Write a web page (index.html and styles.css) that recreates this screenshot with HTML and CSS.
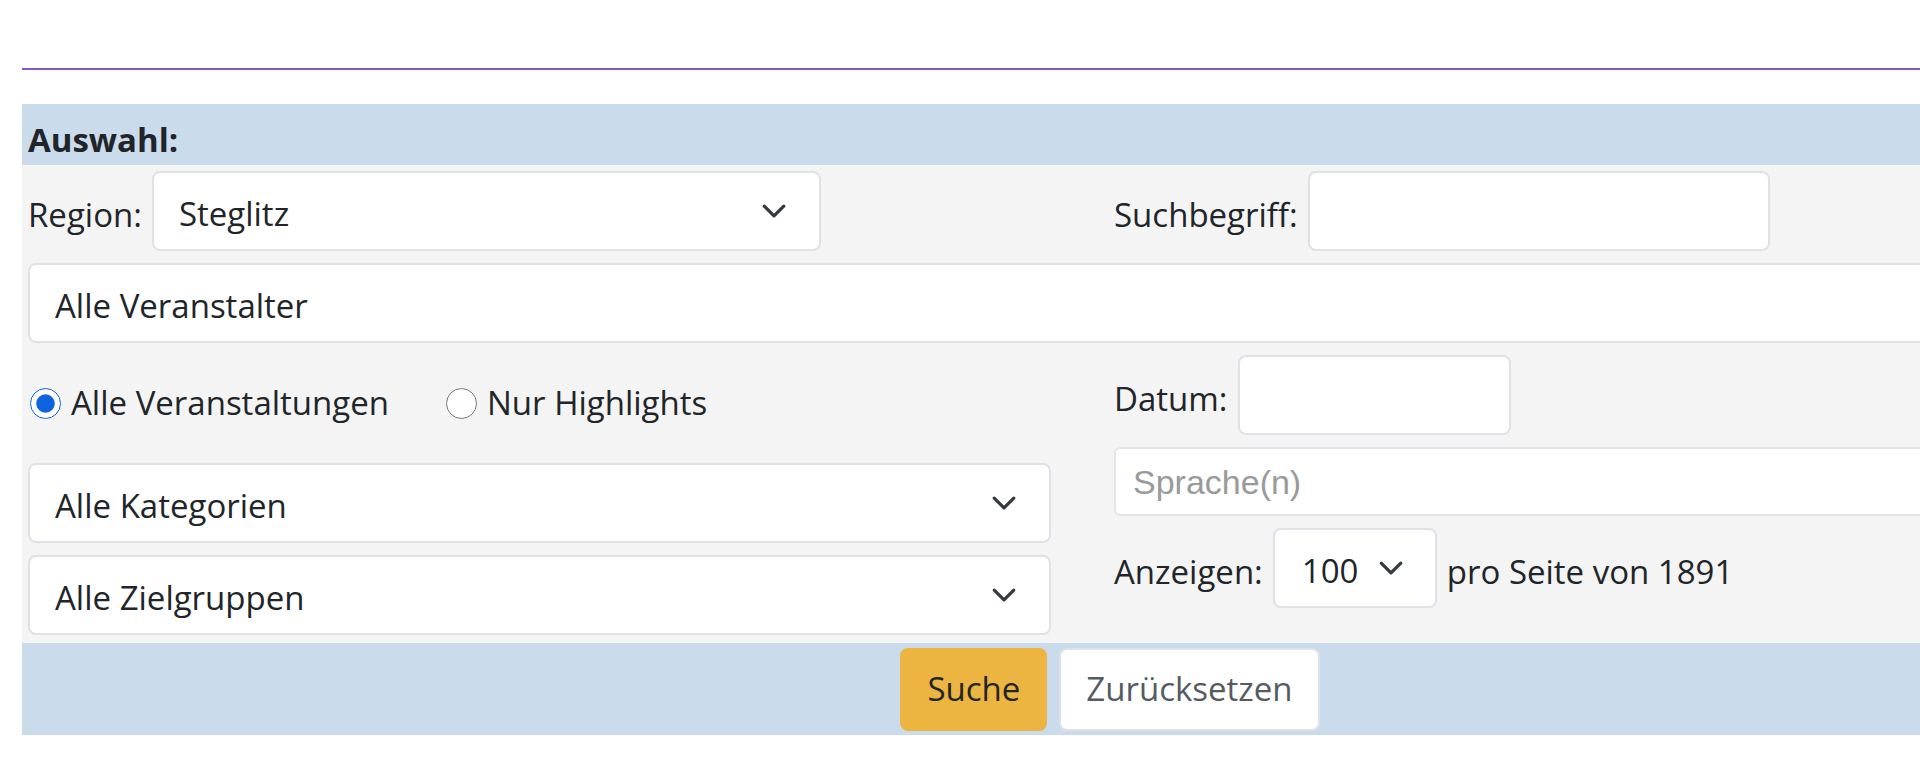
FILE: index.html
```html
<!DOCTYPE html>
<html lang="de">
<head>
<meta charset="utf-8">
<title>Veranstaltungen – Auswahl</title>
<link rel="stylesheet" href="styles.css">
</head>
<body>
<div class="page">
  <hr class="rule">
  <form class="filter">
    <div class="filter-head">Auswahl:</div>
    <div class="filter-body">
      <div class="pair">
        <div class="field">
          <label class="label" for="region">Region:</label>
          <div class="select-wrap w-region">
            <select id="region" class="control select"><option>Steglitz</option></select>
            <svg class="chev" width="26" height="26" viewBox="0 0 16 16"><path d="M2 5l6 6 6-6"/></svg>
          </div>
        </div>
        <div class="field">
          <label class="label" for="q">Suchbegriff:</label>
          <input id="q" class="control input w-search" type="text">
        </div>
      </div>

      <div class="select-wrap w-full">
        <select class="control select"><option>Alle Veranstalter</option></select>
        <svg class="chev" width="26" height="26" viewBox="0 0 16 16"><path d="M2 5l6 6 6-6"/></svg>
      </div>

      <div class="pair">
        <div class="col">
          <div class="radios">
            <label class="radio"><input type="radio" name="hl" checked><span>Alle Veranstaltungen</span></label>
            <label class="radio"><input type="radio" name="hl"><span>Nur Highlights</span></label>
          </div>
          <div class="select-wrap">
            <select class="control select"><option>Alle Kategorien</option></select>
            <svg class="chev" width="26" height="26" viewBox="0 0 16 16"><path d="M2 5l6 6 6-6"/></svg>
          </div>
          <div class="select-wrap">
            <select class="control select"><option>Alle Zielgruppen</option></select>
            <svg class="chev" width="26" height="26" viewBox="0 0 16 16"><path d="M2 5l6 6 6-6"/></svg>
          </div>
        </div>
        <div class="col">
          <div class="field">
            <label class="label" for="datum">Datum:</label>
            <input id="datum" class="control input w-date" type="text">
          </div>
          <input class="multi" type="text" placeholder="Sprache(n)">
          <div class="field">
            <label class="label" for="count">Anzeigen:</label>
            <div class="select-wrap w-count">
              <select id="count" class="control select select-sm"><option>100</option></select>
              <svg class="chev chev-sm" width="26" height="26" viewBox="0 0 16 16"><path d="M2 5l6 6 6-6"/></svg>
            </div>
            <span class="total">pro Seite von 1891</span>
          </div>
        </div>
      </div>
    </div>
    <div class="filter-foot">
      <button type="button" class="btn btn-search">Suche</button>
      <button type="button" class="btn btn-reset">Zurücksetzen</button>
    </div>
  </form>
</div>
</body>
</html>
```

FILE: styles.css
```css
* {
  box-sizing: border-box;
}

html,
body {
  margin: 0;
  padding: 0;
}

body {
  width: 1920px;
  height: 768px;
  overflow: hidden;
  background: #ffffff;
  color: #212529;
  font-family: "Open Sans", "Noto Sans", sans-serif;
  font-size: 33px;
  line-height: 1.5;
}

.page {
  padding: 68px 0 0 22px;
}

.rule {
  width: 2200px;
  height: 2px;
  margin: 0;
  border: 0;
  background: #8457c9;
}

.filter {
  width: 2176px;
  margin-top: 34px;
}

.filter-head {
  height: 61px;
  padding: 10px 0 0 6px;
  background: #cadcec;
  font-weight: 700;
  line-height: 51px;
}

.filter-body {
  display: flex;
  flex-direction: column;
  gap: 12px;
  padding: 6px 6px 8px;
  background: #f4f4f4;
}

.pair {
  display: grid;
  grid-template-columns: 1023px 1fr;
  column-gap: 63px;
}

.col {
  display: flex;
  flex-direction: column;
  gap: 12px;
}

.field {
  display: flex;
  align-items: center;
  gap: 10px;
  height: 80px;
}

.label,
.total {
  padding-top: 7px;
  white-space: nowrap;
}

.control {
  height: 80px;
  border: 2px solid #dee2e6;
  border-radius: 8px;
  background: #ffffff;
  color: #212529;
  font: inherit;
  outline: none;
}

.select-wrap {
  display: grid;
  align-items: center;
}

.select-wrap > * {
  grid-area: 1 / 1;
}

.select {
  width: 100%;
  padding: 6px 80px 0 25px;
  appearance: none;
  -webkit-appearance: none;
}

.select-sm {
  padding: 6px 60px 0 27px;
}

.chev {
  justify-self: end;
  margin-right: 34px;
  pointer-events: none;
  fill: none;
  stroke: #343a40;
  stroke-width: 2;
  stroke-linecap: round;
  stroke-linejoin: round;
}

.chev-sm {
  margin-right: 33px;
}

.w-region {
  width: 669px;
}

.w-full {
  width: 100%;
}

.w-count {
  width: 164px;
}

.input {
  padding: 0 25px;
}

.w-search {
  width: 462px;
}

.w-date {
  width: 273px;
}

.radios {
  display: flex;
  align-items: center;
  gap: 57px;
  height: 96px;
  padding-left: 2px;
}

.radio {
  display: flex;
  align-items: center;
  gap: 10px;
}

.radio input {
  width: 31px;
  height: 31px;
  margin: 0;
  accent-color: #0d63e0;
}

.multi {
  width: 100%;
  height: 69px;
  padding: 2px 17px 0;
  border: 2px solid #e2e5e9;
  border-radius: 6px;
  background: #ffffff;
  font-family: "Liberation Sans", Arial, sans-serif;
  font-size: 34px;
  color: #212529;
  outline: none;
}

.multi::placeholder {
  color: #9a9a9a;
}

.filter-foot {
  display: flex;
  justify-content: center;
  align-items: center;
  gap: 12px;
  height: 92px;
  background: #cadcec;
}

.btn {
  height: 83px;
  padding: 0 25px;
  border: 2px solid transparent;
  border-radius: 8px;
  font: inherit;
  cursor: pointer;
}

.btn-search {
  background: #ecb440;
  border-color: #ecb440;
  color: #212529;
}

.btn-reset {
  background: #ffffff;
  border-color: #dee2e6;
  color: #555b62;
}
```
